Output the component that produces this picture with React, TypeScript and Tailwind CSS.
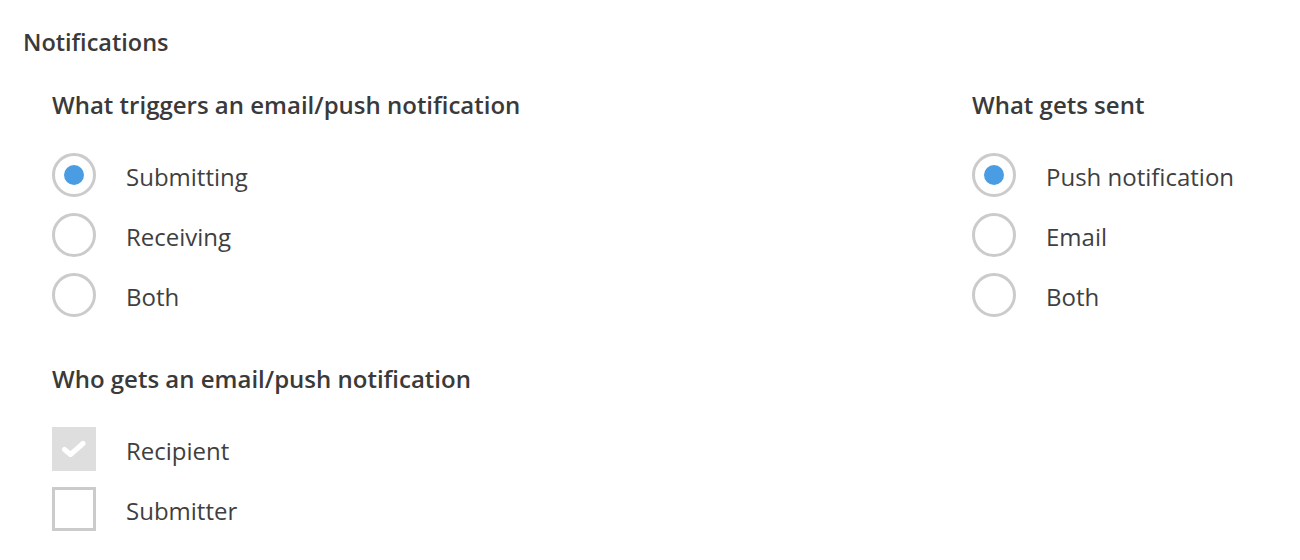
import React from "react";

function Radio({ checked, label }: { checked?: boolean; label: string }) {
  return (
    <div className="flex items-center h-[44px]">
      <div className="w-[44px] h-[44px] rounded-full border-[3px] border-[#cbcbcb] bg-white flex items-center justify-center shrink-0">
        {checked && <div className="w-[20px] h-[20px] rounded-full bg-[#4a9de3]" />}
      </div>
      <span className="ml-[30px] pt-[4px] text-[24px] leading-[30px] text-[#3f3f3f]">{label}</span>
    </div>
  );
}

function Checkbox({ checked, label }: { checked?: boolean; label: string }) {
  return (
    <div className="flex items-center h-[44px]">
      {checked ? (
        <div className="w-[44px] h-[44px] bg-[#dedede] flex items-center justify-center shrink-0">
          <svg width="26" height="20" viewBox="0 0 26 20">
            <polyline points="3.5,10.5 9.5,15.5 22,4.5" fill="none" stroke="#ffffff" strokeWidth="5" strokeLinecap="round" strokeLinejoin="round" />
          </svg>
        </div>
      ) : (
        <div className="w-[44px] h-[44px] border-[3px] border-[#cbcbcb] bg-white shrink-0" />
      )}
      <span className="ml-[30px] pt-[4px] text-[24px] leading-[30px] text-[#3f3f3f]">{label}</span>
    </div>
  );
}

export default function App() {
  return (
    <div
      className="w-[1300px] h-[560px] bg-white pl-[23px] pt-[27px]"
      style={{ fontFamily: '"Open Sans", "Liberation Sans", sans-serif' }}
    >
      <h1 className="text-[23.5px] leading-[30px] font-semibold text-[#3a3a3a]">Notifications</h1>
      <div className="pl-[29px] mt-[33px] flex">
        <div className="w-[920px]">
          <h2 className="text-[24px] leading-[30px] font-semibold text-[#3a3a3a]">
            What triggers an email/push notification
          </h2>
          <div className="mt-[33px] flex flex-col gap-[16px]">
            <Radio checked label="Submitting" />
            <Radio label="Receiving" />
            <Radio label="Both" />
          </div>
          <h2 className="mt-[47px] text-[24px] leading-[30px] font-semibold text-[#3a3a3a]">
            Who gets an email/push notification
          </h2>
          <div className="mt-[33px] flex flex-col gap-[16px]">
            <Checkbox checked label="Recipient" />
            <Checkbox label="Submitter" />
          </div>
        </div>
        <div>
          <h2 className="text-[24px] leading-[30px] font-semibold text-[#3a3a3a]">What gets sent</h2>
          <div className="mt-[33px] flex flex-col gap-[16px]">
            <Radio checked label="Push notification" />
            <Radio label="Email" />
            <Radio label="Both" />
          </div>
        </div>
      </div>
    </div>
  );
}
